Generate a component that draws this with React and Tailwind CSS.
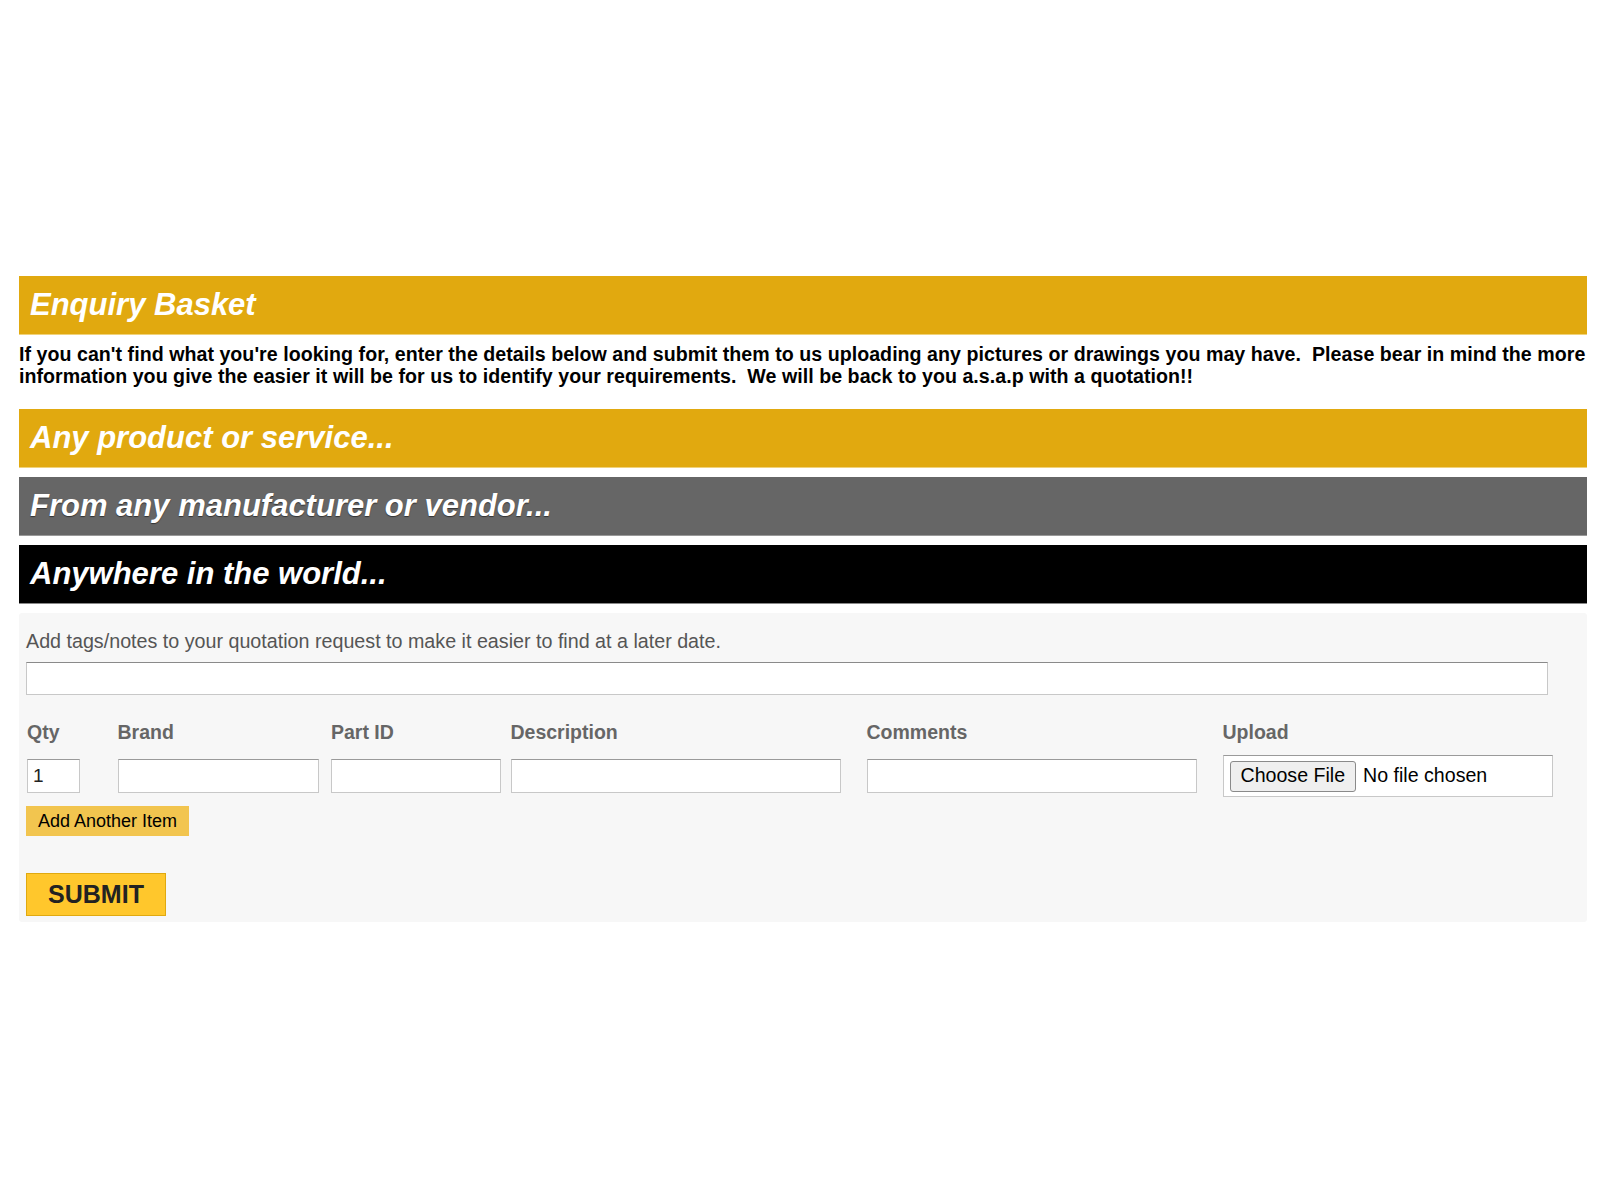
export default function App() {
  const cols = [
    { label: 'Qty', w: 'w-[53px]', value: '1' },
    { label: 'Brand', w: 'w-[201px]' },
    { label: 'Part ID', w: 'w-[170px]' },
    { label: 'Description', w: 'w-[330px]' },
    { label: 'Comments', w: 'w-[330px]' },
  ];

  return (
    <div className="min-h-[1200px] bg-white pl-[19px] pr-[13px] pt-[276px] font-['Liberation_Sans',Arial,sans-serif]">
      <h1 className="flex h-[59px] items-center border-b border-[#f0d27a] bg-[#e1a90f] px-[11px] text-[31px] font-bold italic text-white">
        Enquiry Basket
      </h1>
      <p className="mt-[8px] text-[19.6px] font-bold leading-[22px] tracking-[0.04px] text-black">
        If you can't find what you're looking for, enter the details below and submit them to us uploading any pictures or drawings you may have.&nbsp; Please bear in mind the more
        <br />
        information you give the easier it will be for us to identify your requirements.&nbsp; We will be back to you a.s.a.p with a quotation!!
      </p>

      <div className="mt-[22px] flex flex-col gap-[9px]">
        <h2 className="flex h-[59px] items-center border-b border-[#f0d27a] bg-[#e1a90f] px-[11px] text-[31px] font-bold italic text-white">
          Any product or service...
        </h2>
        <h2 className="flex h-[59px] items-center border-b border-[#999] bg-[#666666] px-[11px] text-[31px] font-bold italic text-white [text-shadow:0_1px_1px_rgba(0,0,0,0.5)]">
          From any manufacturer or vendor...
        </h2>
        <h2 className="flex h-[59px] items-center border-b border-[#888] bg-black px-[11px] text-[31px] font-bold italic text-white">
          Anywhere in the world...
        </h2>
      </div>

      <form className="mt-[9px] rounded-[3px] bg-[#f7f7f7] pb-[6px] pl-[7px] pr-[8px] pt-[17px]">
        <label className="block text-[19.7px] leading-[22px] text-[#555]">
          Add tags/notes to your quotation request to make it easier to find at a later date.
        </label>
        <input
          type="text"
          className="mt-[10px] block h-[33px] w-[1522px] border border-[#c8c8c8] border-t-[#8a8a8a] bg-white"
        />

        <div className="mt-[26px] grid grid-cols-[90.5px_213.5px_179.5px_356px_356px_330px] items-center gap-y-[12px] pl-[1px]">
          {cols.map((c) => (
            <span key={c.label} className="text-[19.5px] font-bold leading-[22px] text-[#666]">
              {c.label}
            </span>
          ))}
          <span className="text-[19.5px] font-bold leading-[22px] text-[#666]">Upload</span>

          {cols.map((c) => (
            <input
              key={c.label}
              type="text"
              defaultValue={c.value}
              className={`${c.w} h-[34px] border border-[#c8c8c8] border-t-[#9a9a9a] bg-white px-[5px] text-[19px] text-[#222]`}
            />
          ))}
          <div className="flex h-[42px] w-[330px] items-center gap-[7px] border border-[#c8c8c8] border-t-[#9a9a9a] bg-white px-[6px]">
            <button
              type="button"
              className="h-[31px] rounded-[3px] border border-[#8a8a8a] bg-[#efefef] px-[10px] text-[19.6px] leading-none text-black"
            >
              Choose File
            </button>
            <span className="text-[19.6px] text-black">No file chosen</span>
          </div>
        </div>

        <button
          type="button"
          className="mt-[9px] block h-[30px] w-[163px] border border-[#f2c44e] bg-[#f2c54f] text-[18px] text-black"
        >
          Add Another Item
        </button>

        <button
          type="submit"
          className="mt-[37px] block h-[43px] w-[140px] border border-[#e0a910] bg-[#ffc72c] text-[25px] font-bold text-[#222]"
        >
          SUBMIT
        </button>
      </form>
    </div>
  );
}
